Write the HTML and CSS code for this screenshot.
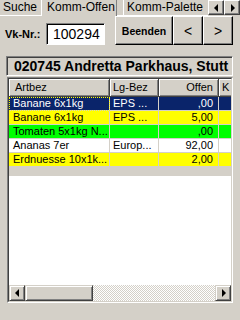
FILE: index.html
```html
<!DOCTYPE html>
<html lang="de">
<head>
    <meta charset="UTF-8">
    <meta name="viewport" content="width=device-width, initial-scale=1.0">
    <title>Komm-Offen</title>
    <link rel="stylesheet" href="styles.css">
</head>
<body>

<div class="screen">
    <div class="tabs">
        <div class="tab tab-first">Suche</div>
        <div class="tab tab-active">Komm-Offen</div>
        <div class="tab-gap"></div>
        <div class="tab tab-last">Komm-Palette</div>
        <div class="tab-arrow"><span class="tri tri-left"></span></div>
        <div class="tab-arrow"><span class="tri tri-right"></span></div>
    </div>

    <div class="toolbar">
        <label class="vk-label">Vk-Nr.:</label>
        <div class="vk-input">100294</div>
        <div class="buttons">
            <button class="btn btn-end">Beenden</button>
            <button class="btn btn-nav">&lt;</button>
            <button class="btn btn-nav">&gt;</button>
        </div>
    </div>

    <div class="customer">020745 Andretta Parkhaus, Stutt</div>

    <div class="grid">
        <div class="grid-inner">
            <div class="grid-body">
                <table class="items">
                    <colgroup>
                        <col class="c-art">
                        <col class="c-lg">
                        <col class="c-off">
                        <col class="c-k">
                    </colgroup>
                    <thead>
                        <tr>
                            <th>Artbez</th>
                            <th>Lg-Bez</th>
                            <th class="num">Offen</th>
                            <th>K</th>
                        </tr>
                    </thead>
                    <tbody>
                        <tr class="sel">
                            <td class="focus">Banane 6x1kg</td>
                            <td>EPS ...</td>
                            <td class="num">,00</td>
                            <td></td>
                        </tr>
                        <tr class="yellow">
                            <td>Banane 6x1kg</td>
                            <td>EPS ...</td>
                            <td class="num">5,00</td>
                            <td></td>
                        </tr>
                        <tr class="green">
                            <td>Tomaten 5x1kg N...</td>
                            <td></td>
                            <td class="num">,00</td>
                            <td></td>
                        </tr>
                        <tr>
                            <td>Ananas 7er</td>
                            <td>Europ...</td>
                            <td class="num">92,00</td>
                            <td></td>
                        </tr>
                        <tr class="yellow">
                            <td>Erdnuesse 10x1k...</td>
                            <td></td>
                            <td class="num">2,00</td>
                            <td></td>
                        </tr>
                        <tr><td></td><td></td><td></td><td></td></tr>
                        <tr><td></td><td></td><td></td><td></td></tr>
                        <tr><td></td><td></td><td></td><td></td></tr>
                        <tr><td></td><td></td><td></td><td></td></tr>
                        <tr><td></td><td></td><td></td><td></td></tr>
                        <tr><td></td><td></td><td></td><td></td></tr>
                        <tr><td></td><td></td><td></td><td></td></tr>
                        <tr><td></td><td></td><td></td><td></td></tr>
                        <tr><td></td><td></td><td></td><td></td></tr>
                    </tbody>
                </table>
            </div>
            <div class="hscroll">
                <div class="sb-btn"><span class="tri tri-left"></span></div>
                <div class="sb-thumb"></div>
                <div class="sb-track"></div>
                <div class="sb-btn"><span class="tri tri-right"></span></div>
            </div>
        </div>
    </div>
</div>

</body>
</html>
```

FILE: styles.css
```css
html, body { margin: 0; padding: 0; background: #d4d0c8; }
body { font-family: "Liberation Sans", Arial, sans-serif; font-size: 11px; color: #000; }
.screen { width: 240px; height: 320px; overflow: hidden; }

/* tab strip */
.tabs { display: flex; height: 16px; font-size: 12px; line-height: 15px; }
.tab { box-sizing: border-box; height: 16px; white-space: nowrap; overflow: hidden; }
.tab-first { width: 42px; padding-left: 3px; border-right: 1px solid #fff; border-bottom: 1px solid #fff; }
.tab-active { width: 75px; padding-left: 5px; border-right: 1px solid #808080; overflow: visible; }
.tab-gap { width: 6px; height: 16px; box-sizing: border-box; border-bottom: 1px solid #fff; }
.tab-last { width: 85px; padding-left: 3px; border-left: 1px solid #fff; border-bottom: 1px solid #fff; }
.tab-arrow { width: 16px; height: 15px; box-sizing: border-box; display: flex; align-items: center; justify-content: center;
    border: 1px solid; border-color: #fff #404040 #404040 #fff; box-shadow: inset -1px -1px #808080; }

.tri { display: block; width: 0; height: 0; border-top: 4px solid transparent; border-bottom: 4px solid transparent; }
.tri-left { border-right: 4px solid #000; margin-left: -1px; }
.tri-right { border-left: 4px solid #000; margin-left: 1px; }

/* vk row */
.toolbar { display: flex; height: 30px; }
.vk-label { box-sizing: border-box; width: 41px; padding-left: 5px; margin-top: 12px; line-height: 13px; font-weight: bold; font-size: 11px; }
.vk-input { box-sizing: border-box; width: 59px; height: 22px; margin: 7px 0 0 5px; padding-left: 6px; background: #fff;
    border: 1px solid; border-color: #808080 #fff #fff #808080; box-shadow: inset 1px 1px #000;
    font-size: 14px; line-height: 21px; }
.buttons { display: flex; margin-left: 10px; height: 29px; }
.btn { box-sizing: border-box; height: 29px; padding: 0; margin: 0; background: #d4d0c8; font-family: inherit; color: #000;
    border: 1px solid; border-color: #fff #000 #000 #fff; box-shadow: inset -1px -1px #808080; }
.btn-end { width: 58px; font-weight: bold; font-size: 10.5px; }
.btn-nav { width: 30px; font-size: 14px; }

/* customer header */
.customer { box-sizing: border-box; height: 20px; margin: 10px 7px 0 6px; padding-left: 7px;
    border: 1px solid; border-color: #808080 #fff #fff #808080; box-shadow: inset 1px 1px #404040;
    font-weight: bold; font-size: 14px; line-height: 18px; white-space: nowrap; overflow: hidden; }

/* grid */
.grid { box-sizing: border-box; width: 226px; height: 226px; margin: 1px 0 0 7px;
    border: 1px solid; border-color: #808080 #fff #fff #808080; }
.grid-inner { box-sizing: border-box; height: 224px; display: flex; flex-direction: column;
    border: 1px solid; border-color: #404040 #d4d0c8 #d4d0c8 #404040; background: #fff; }
.grid-body { flex: 1; overflow: hidden; }

.items { table-layout: fixed; border-collapse: separate; border-spacing: 0; width: 250px; }
.c-art { width: 101px; }
.c-lg { width: 49px; }
.c-off { width: 60px; }
.c-k { width: 40px; }
.items th, .items td { padding: 0; white-space: nowrap; overflow: hidden; text-align: left; font-weight: normal; }
.items th { box-sizing: border-box; line-height: 17px; background: #d4d0c8; padding-left: 3px;
    border-right: 1px solid #404040; border-bottom: 1px solid #404040; box-shadow: inset 1px 1px #fff, inset -1px -1px #808080; }
.items th:first-child { padding-left: 6px; }
.items td { line-height: 13px; padding-left: 3px; border-right: 1px solid #d4d0c8; border-bottom: 1px solid #d4d0c8; }
.items td:first-child { padding-left: 4px; }
.items .num { text-align: right; padding-right: 5px; padding-left: 0; }

.sel td { background: #0a246a; color: #fff; }
.sel td.focus { outline: 1px dotted #ffff00; outline-offset: -1px; }
.yellow td { background: #ffff00; }
.green td { background: #00ff00; }

/* horizontal scrollbar */
.hscroll { display: flex; height: 16px; flex: none; }
.sb-btn, .sb-thumb { box-sizing: border-box; height: 16px; background: #d4d0c8;
    border: 1px solid; border-color: #d4d0c8 #404040 #404040 #d4d0c8; box-shadow: inset 1px 1px #fff, inset -1px -1px #808080; }
.sb-btn { width: 16px; display: flex; align-items: center; justify-content: center; }
.sb-thumb { width: 68px; }
.sb-track { flex: 1; background: repeating-conic-gradient(#fff 0 25%, #d4d0c8 0 50%) 0 0 / 2px 2px; }
```
